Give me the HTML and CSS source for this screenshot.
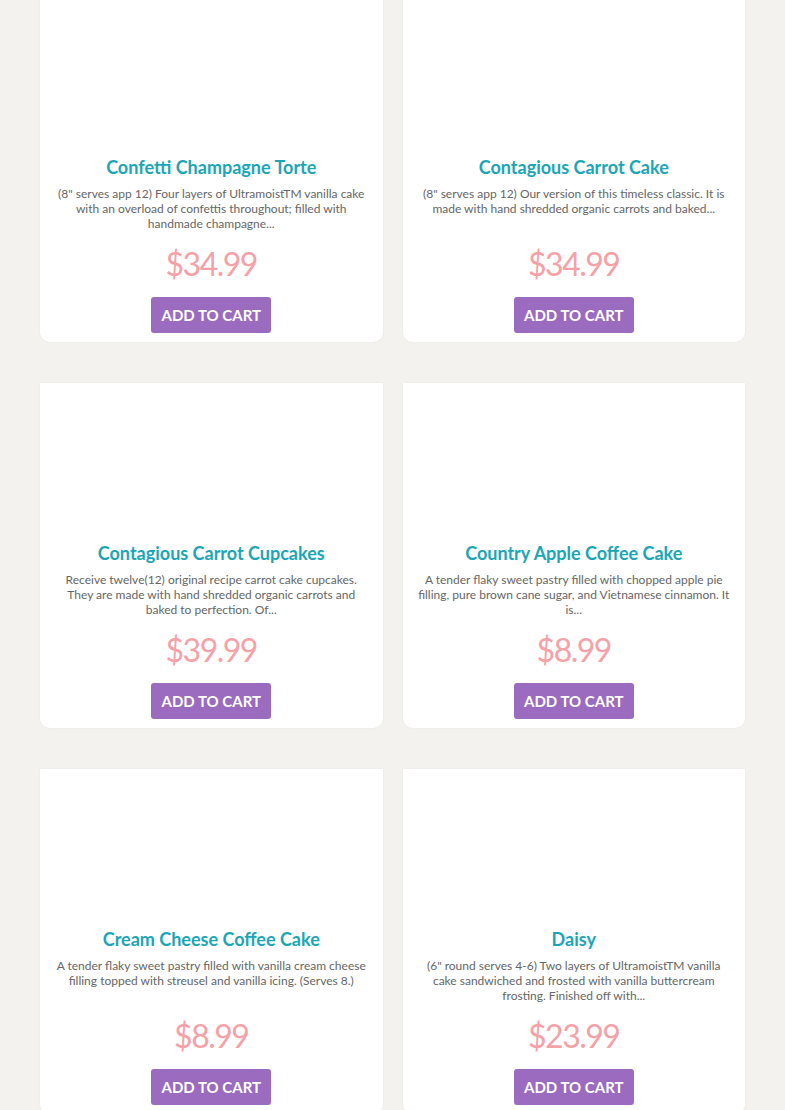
FILE: index.html
```html
<!DOCTYPE html>
<html>
<head>
    <title>Cakes</title>
    <link rel="stylesheet" href="styles.css">
</head>
<body>
    <div class="products">
        <div class="product">
            <div class="product-image"></div>
            <h2 class="product-title">Confetti Champagne Torte</h2>
            <p class="product-desc">(8" serves app 12) Four layers of UltramoistTM vanilla cake with an overload of confettis throughout; filled with handmade champagne...</p>
            <div class="product-price">$34.99</div>
            <button class="add-to-cart">Add to Cart</button>
        </div>
        <div class="product">
            <div class="product-image"></div>
            <h2 class="product-title">Contagious Carrot Cake</h2>
            <p class="product-desc">(8" serves app 12) Our version of this timeless classic. It is made with hand shredded organic carrots and baked...</p>
            <div class="product-price">$34.99</div>
            <button class="add-to-cart">Add to Cart</button>
        </div>
        <div class="product">
            <div class="product-image"></div>
            <h2 class="product-title">Contagious Carrot Cupcakes</h2>
            <p class="product-desc">Receive twelve(12) original recipe carrot cake cupcakes. They are made with hand shredded organic carrots and baked to perfection. Of...</p>
            <div class="product-price">$39.99</div>
            <button class="add-to-cart">Add to Cart</button>
        </div>
        <div class="product">
            <div class="product-image"></div>
            <h2 class="product-title">Country Apple Coffee Cake</h2>
            <p class="product-desc">A tender flaky sweet pastry filled with chopped apple pie filling, pure brown cane sugar, and Vietnamese cinnamon. It is...</p>
            <div class="product-price">$8.99</div>
            <button class="add-to-cart">Add to Cart</button>
        </div>
        <div class="product">
            <div class="product-image"></div>
            <h2 class="product-title">Cream Cheese Coffee Cake</h2>
            <p class="product-desc">A tender flaky sweet pastry filled with vanilla cream cheese filling topped with streusel and vanilla icing. (Serves 8.)</p>
            <div class="product-price">$8.99</div>
            <button class="add-to-cart">Add to Cart</button>
        </div>
        <div class="product">
            <div class="product-image"></div>
            <h2 class="product-title">Daisy</h2>
            <p class="product-desc">(6" round serves 4-6) Two layers of UltramoistTM vanilla cake sandwiched and frosted with vanilla buttercream frosting. Finished off with...</p>
            <div class="product-price">$23.99</div>
            <button class="add-to-cart">Add to Cart</button>
        </div>
    </div>
</body>
</html>
```

FILE: styles.css
```css
html, body {
    height: 1110px;
    overflow: hidden;
}

body {
    margin: 0;
    background-color: #f3f2ee;
    font-family: Lato, "Liberation Sans", sans-serif;
}

.products {
    display: grid;
    grid-template-columns: 1fr 1fr;
    column-gap: 20px;
    row-gap: 41px;
    padding: 0 40px;
    margin-top: -3px;
}

.product {
    background-color: #fff;
    border-radius: 0 0 10px 10px;
    box-shadow: 0 0 3px rgba(0, 0, 0, 0.05);
    display: flex;
    flex-direction: column;
    align-items: center;
    padding: 0 14px 9px;
    text-align: center;
}

.product-image {
    height: 159px;
}

.product-title {
    margin: 0;
    font-size: 18px;
    line-height: 22px;
    font-weight: 700;
    color: #1ba6b6;
}

.product-desc {
    margin: 8px 0 0;
    height: 45px;
    font-size: 12px;
    line-height: 15px;
    color: #666;
}

.product-price {
    margin-top: 13px;
    font-size: 32px;
    line-height: 40px;
    letter-spacing: -1.5px;
    color: #f4a2a8;
}

.add-to-cart {
    margin-top: 13px;
    height: 36px;
    padding: 0 10px;
    font-family: inherit;
    font-size: 15px;
    font-weight: 700;
    text-transform: uppercase;
    color: #fff;
    background-color: #9a6bbf;
    border: none;
    border-radius: 3px;
    cursor: pointer;
}
```
